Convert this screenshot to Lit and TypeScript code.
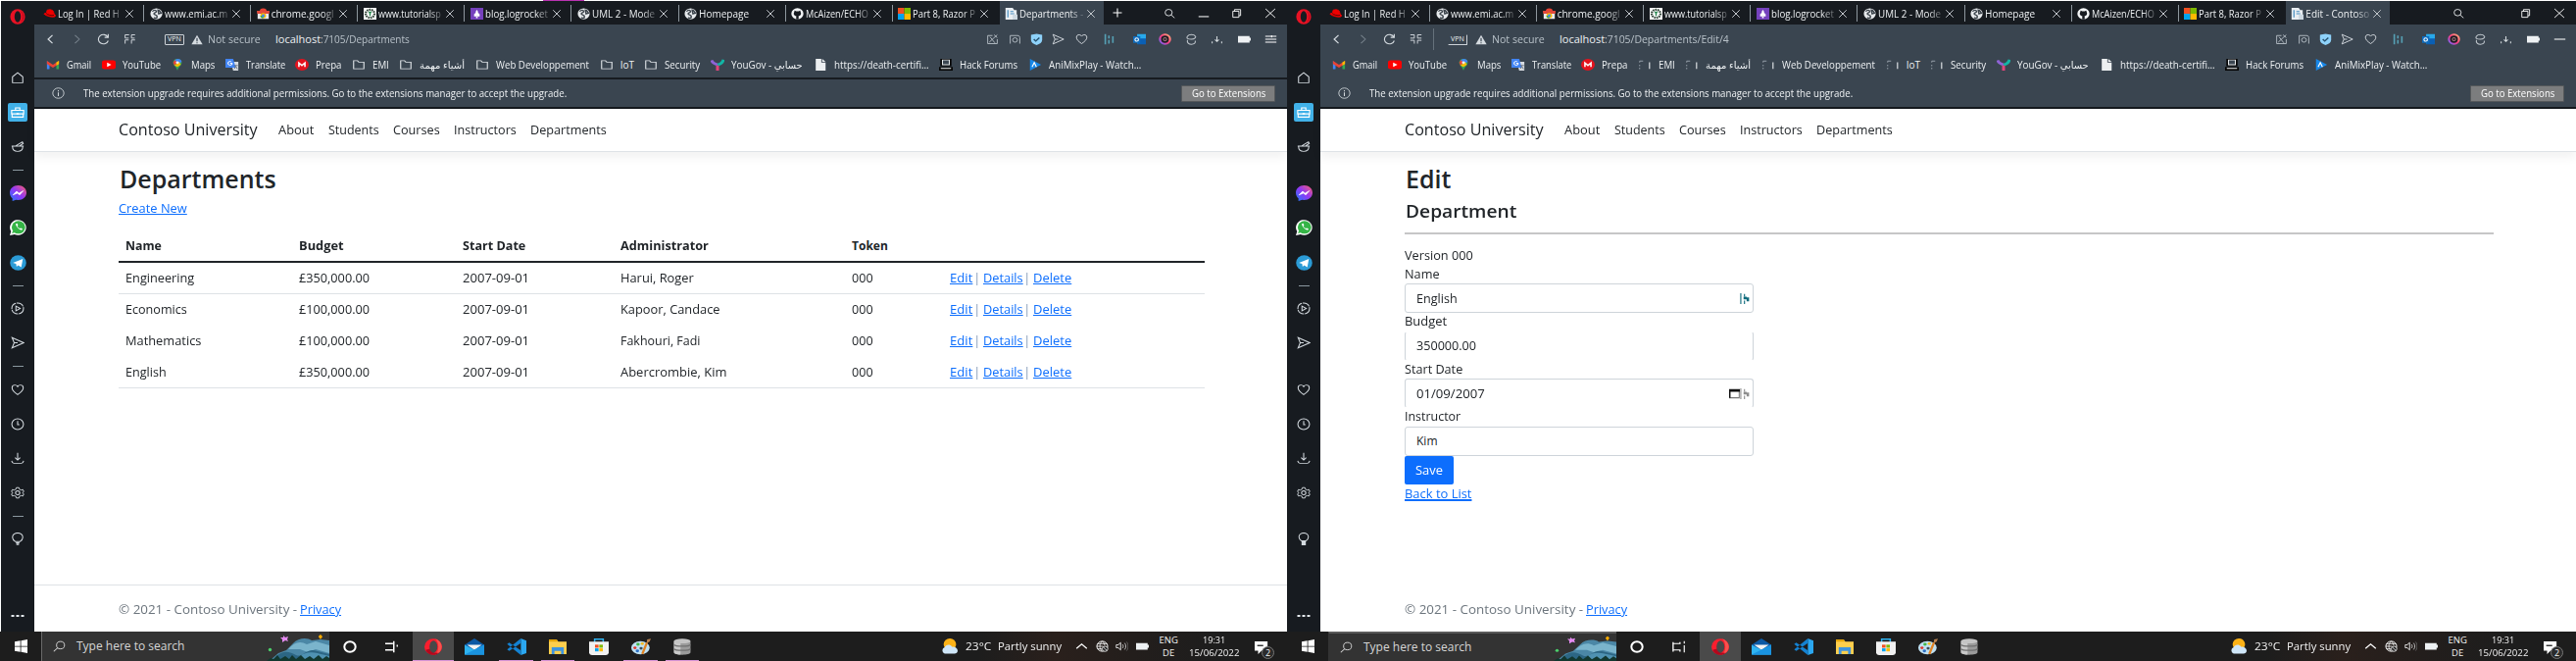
import { LitElement, html, css, svg, nothing } from "lit";
import { customElement, property, query } from "lit/decorators.js";
import { classMap } from "lit/directives/class-map.js";

/* Text stretched horizontally to a given advance width. */
@customElement("fit-text")
class FitText extends LitElement {
  @property({ type: Number }) w = 0;
  @property() text = "";
  @query("span") span!: HTMLElement;
  static styles = css`
    :host { display: inline-block; white-space: nowrap; flex: none; text-decoration: inherit; }
    span { display: inline-block; transform-origin: 0 50%; text-decoration: inherit; }
  `;
  render() {
    return html`<span>${this.text}</span>`;
  }
  updated() {
    this.style.width = this.w + "px";
    this.span.style.transform = `scaleX(${this.w / this.span.offsetWidth})`;
  }
}

const ft = (text: string, w: number, cls = "") => html`<fit-text class=${cls} .text=${text} .w=${w}></fit-text>`;

const L = "#d5dbe0";
const glyphs: Record<string, unknown> = {
  opera: svg`<ellipse cx="8" cy="8" rx="7.6" ry="7.8" fill="#e81224"/><ellipse cx="8" cy="8" rx="3.2" ry="5.8" fill="#171b20"/><path d="M11 2.2c2 1.300 3.200 3.400 3.200 5.800s-1.200 4.500-3.200 5.800a7.600 7.800 0 0 0 0-11.600z" fill="#a70014"/>`,
  operaTask: svg`<ellipse cx="8" cy="8" rx="8" ry="7.800" fill="#fa1e2e"/><path d="M9 .3a8 7.800 0 0 1 0 15.400c2.400-.8 3.600-4.200 3.600-7.700S11.400 1 9 .3z" fill="#f9524e"/><path d="M1 11c1.500 3 4 4.800 7 4.800 2 0 3.500-.6 5-2-4 .6-7-1-8-4z" fill="#b3081d"/><ellipse cx="8.200" cy="8" rx="3.600" ry="5.800" fill="#484848"/>`,
  home: svg`<path d="M2 14V6.500L8 1.500l6 5V14z" fill="none" stroke=${L} stroke-width="1.200"/>`,
  bag: svg`<path d="M1 5.500h14V10H1zM1.500 10v4h13v-4M5.500 5.500v-3h5v3" fill="none" stroke="#fff" stroke-width="1.300"/><path d="M6.500 9h3v2h-3z" fill="#fff"/>`,
  pot: svg`<path d="M1 7.500h14M2 8c0 4 2.500 6 6 6s6-2 6-6M6 7l7.500-5 1 2-4 3" fill="none" stroke=${L} stroke-width="1.200"/>`,
  messenger: svg`<defs><linearGradient id="mg" x1="0" y1="1" x2="1" y2="0"><stop offset="0" stop-color="#1e7bff"/><stop offset=".5" stop-color="#9038f5"/><stop offset="1" stop-color="#ff5f6d"/></linearGradient></defs><path d="M8 0c4.600 0 8 3.200 8 7.500S12.600 15 8 15l-2-.2L2.500 16v-2.700C1 12 0 10 0 7.500 0 3.200 3.400 0 8 0z" fill="url(#mg)"/><path d="M3 9.800 6.500 6l2.300 2L13 5.500 9.500 9.800 7.300 8z" fill="#fff" stroke="#fff" stroke-width=".6"/>`,
  whatsapp: svg`<path d="M0 16l1.200-4A7.800 7.800 0 1 1 4.500 15z" fill="#fff"/><circle cx="8.300" cy="7.800" r="6.500" fill="#35b446"/><path d="M2 14l1-3 2 2z" fill="#35b446"/><path d="M5.500 4.500c1 3 2.500 5 5.800 6.300l1-1.400-1.800-1-1 .6C8.400 8.400 7.700 7.500 7.200 6.500l.7-.8-.8-1.900z" fill="#fff"/>`,
  telegram: svg`<circle cx="8" cy="8" r="7.800" fill="#2b9bd6"/><path d="M3 8l9.500-4L11 12.500 8 10.500l-1.500 1.500L6 9z" fill="#fff"/>`,
  player: svg`<circle cx="8" cy="8" r="6.800" fill="none" stroke=${L} stroke-width="1.200" stroke-dasharray="9 1"/><path d="M6 5l5 3-5 3z" fill="none" stroke=${L} stroke-width="1.200"/>`,
  send: svg`<path d="M1.500 1.500 15 8 1.500 14.500 4 8z M4 8h4" fill="none" stroke=${L} stroke-width="1.200"/>`,
  heart: svg`<path d="M8 14C4 11 1.500 8.500 1.500 5.500 1.500 3 3 2 4.800 2 6.300 2 7.500 3 8 4c.5-1 1.700-2 3.200-2C13 2 14.500 3 14.500 5.500c0 3-2.500 5.500-6.500 8.500z" fill="none" stroke=${L} stroke-width="1.200"/>`,
  clock: svg`<circle cx="8" cy="8" r="6.800" fill="none" stroke=${L} stroke-width="1.200"/><path d="M8 4v4.500h2" fill="none" stroke=${L} stroke-width="1.200"/>`,
  download: svg`<path d="M8 1v9M5 7l3 3 3-3M1 11c.5 2 1 3 2.500 3h9c1.500 0 2-1 2.500-3" fill="none" stroke=${L} stroke-width="1.200"/>`,
  gear: svg`<circle cx="8" cy="8" r="2.500" fill="none" stroke=${L} stroke-width="1.200"/><path d="M6.500 1.500h3l.5 2 2 1 2.200-.5 1 2.500L13.500 8l1.700 1.500-1 2.500-2.200-.5-2 1-.5 2h-3l-.5-2-2-1-2.200.5-1-2.500L2.500 8 .8 6.500l1-2.500 2.200.5 2-1z" fill="none" stroke=${L} stroke-width="1.100"/>`,
  bulb: svg`<path d="M5.500 11.500C3.500 10 2 8.500 2 6a6 5.500 0 0 1 12 0c0 2.500-1.500 4-3.500 5.500z" fill="none" stroke=${L} stroke-width="1.200"/><path d="M6 13h4M6.500 15h3" stroke=${L} stroke-width="1.600"/>`,
  bulbFill: svg`<path d="M5.500 10.500C3.500 9 2.500 7.500 2.500 5.500a5.500 5 0 0 1 11 0c0 2-1 3.500-3 5z" fill="none" stroke=${L} stroke-width="1.200"/><path d="M5.500 11h5v5h-5z" fill=${L}/>`,
  dots: svg`<path d="M1.500 7h3v2h-3zM6.500 7h3v2h-3zM11.500 7h3v2h-3z" fill="#e3e8ec"/>`,
  redhat: svg`<path d="M1 8c2 3.500 14 6 14.500 3 .2-1-.6-2-1.500-2.500L12.500 4c-.3-1-4-2-5.500-1.500L5 3 4 7z" fill="#e00" stroke="#e00"/><path d="M4 7.500c1 2 7 3.500 9.500 2.500" stroke="#3a0505" fill="none" stroke-width="1"/>`,
  globe: svg`<circle cx="8" cy="8" r="7.500" fill="#e6e9ec"/><path d="M3 5c2-3 5-2 5 0s-3 1-3 3 4 1 4 4-3 2-4 1M10 3c2 0 3 2 4 4l-3 1z" fill="none" stroke="#3c444c" stroke-width="1.800"/>`,
  store2: svg`<path d="M1 5h14v10H1z" fill="#e8eaed"/><path d="M3.500 5a4.500 4.500 0 0 1 9 0z" fill="#ea4335"/><path d="M0 4h16l-.5 4h-15z" fill="#e2493b"/><circle cx="8" cy="10.500" r="3.600" fill="#fbbc04"/><path d="M4.500 10.500a3.600 3.600 0 0 0 3.500 3.600l1.500-3.600z" fill="#34a853"/><circle cx="8" cy="10.500" r="1.800" fill="#4285f4"/>`,
  tut: svg`<path d="M0 0h16v16H0z" fill="#fff"/><circle cx="8" cy="8" r="5.500" fill="none" stroke="#33453a" stroke-width="2.800" stroke-dasharray="2 1"/><path d="M6 6h4M8 6v5" stroke="#2f8a55" stroke-width="1.800"/>`,
  rocket: svg`<path d="M0 0h16v16H0z" fill="#7541bd"/><path d="M8 2.500c1 1 1.500 2.500 1.500 4l2 2v3h-7v-3l2-2c0-1.500.5-3 1.500-4zM7 12h2v2H7z" fill="#fff"/>`,
  github: svg`<circle cx="8" cy="8" r="7.600" fill="#f2f4f5"/><path d="M4.500 3.500 6.500 4.700h3l2-1.200.6 2.500c1.500 3-1 5-2.600 5v4.500h-3V11c-2-.2-4-2-2.600-5z" fill="#171b20"/>`,
  ms: svg`<path d="M0 0h8v8H0z" fill="#f25022"/><path d="M8 0h8v8H8z" fill="#7fba00"/><path d="M0 8h8v8H0z" fill="#00a4ef"/><path d="M8 8h8v8H8z" fill="#ffb900"/>`,
  doc: svg`<path d="M1 0h9l2 3h3v13H1z" fill="#e9eef2"/><path d="M4 3v10M7 5h4M7 8h5" stroke="#4a90c2" stroke-width="1.500"/><path d="M10 9h6v7h-6z" fill="#cdd9e2"/>`,
  x: svg`<path d="M3 3l10 10M13 3 3 13" stroke="#c6cbd0" stroke-width="1.300"/>`,
  X: svg`<path d="M1.500 1.500l13 13M14.500 1.500l-13 13" stroke="#fff" stroke-width="1.300"/>`,
  plus: svg`<path d="M8 2v12M2 8h12" stroke="#fff" stroke-width="1.400"/>`,
  search: svg`<circle cx="7" cy="7" r="4.800" fill="none" stroke="#e4e7ea" stroke-width="1.300"/><path d="M10.500 10.500 15 15" stroke="#e4e7ea" stroke-width="1.300"/>`,
  searchL: svg`<circle cx="9.500" cy="6.500" r="5" fill="none" stroke="#d8d8d8" stroke-width="1.200"/><path d="M6 10 1 15" stroke="#d8d8d8" stroke-width="1.300"/>`,
  min: svg`<path d="M1 13h14" stroke="#fff" stroke-width="1.500"/>`,
  restore: svg`<path d="M2.500 5h9v9h-9zM5 5V2.500h9v9h-2.500" fill="none" stroke="#fff" stroke-width="1.300"/>`,
  back: svg`<path d="M10.500 2.500 5 8l5.500 5.500" fill="none" stroke=${L} stroke-width="1.500"/>`,
  fwd: svg`<path d="M5.500 2.500 11 8l-5.500 5.500" fill="none" stroke="#77828c" stroke-width="1.300"/>`,
  reload: svg`<path d="M13.500 5A6.300 6.300 0 1 0 14 10M14 1v4.500H9.500" fill="none" stroke=${L} stroke-width="1.400"/>`,
  dialL: svg`<path d="M7 2H2v4.500h4.500M2 9h4.500M2 9v5M14.500 2H10v4.500h4M10 9h4.500M10 9v5" fill="none" stroke=${L} stroke-width="1.200"/>`,
  dialR: svg`<path d="M1 2h5v4.500H1M15 2h-5v4.500h5M1 9.500h5V14M15 9.500h-5V14" fill="none" stroke=${L} stroke-width="1.200"/>`,
  warn: svg`<path d="M8 1 15.500 15H.5z" fill="#d5dbe0"/><path d="M8 5.500v5M8 12v1.500" stroke="#3a4550" stroke-width="1.600"/>`,
  snap: svg`<path d="M2 3h6M2 3v11h12V8M4 12 14 2M10 2l4 4M5 5l6 8" fill="none" stroke="#b4bdc4" stroke-width="1.200"/>`,
  cam: svg`<path d="M2 14V3h9c2 0 3 1 3 3v8" fill="none" stroke="#b4bdc4" stroke-width="1.200"/><circle cx="8" cy="9" r="3" fill="none" stroke="#b4bdc4" stroke-width="1.200"/>`,
  shield: svg`<path d="M8 .5 15 2v7c0 3.500-3 5.500-7 7-4-1.500-7-3.500-7-7V2z" fill="#8ed2fa"/><path d="M4.500 8 7 10.500 11.500 6" fill="none" stroke="#24506e" stroke-width="1.800"/>`,
  dash: svg`<path d="M2 1v14M6.500 3v4M6.500 9v5M11.500 4v9" stroke="#56a0b4" stroke-width="2"/>`,
  dashTeal: svg`<path d="M1.500 0v16M7.500 1v4M7.500 11v5" stroke="#0e6a7c" stroke-width="1.800"/><path d="M6 5h5v4H6zM11 6h4v6h-4z" fill="#0e6a7c"/>`,
  dashGray: svg`<path d="M1.500 0v16M7.500 1v4M7.500 11v5" stroke="#8d8d8d" stroke-width="1.800"/><path d="M6 5h5v4H6zM11 6h4v6h-4z" fill="#8d8d8d"/>`,
  cal: svg`<path d="M1 2.500h14V14H1z" fill="none" stroke="#777" stroke-width="1.500"/><path d="M0 1h16v4H0zM0 1h2v13H0z" fill="#111"/>`,
  outlook: svg`<path d="M5 1h11v13H5z" fill="#28a8ea"/><path d="M8 7h8v8H5z" fill="#0a5fb4"/><path d="M0 4h9v9H0z" fill="#0f6cbd"/><circle cx="4.500" cy="8.500" r="2.200" fill="none" stroke="#fff" stroke-width="1.300"/>`,
  ring: svg`<defs><linearGradient id="rg" x1="0" y1="1" x2="1" y2="0"><stop offset="0" stop-color="#6c63ff"/><stop offset=".5" stop-color="#ff3c7d"/><stop offset="1" stop-color="#ffb07a"/></linearGradient></defs><circle cx="8" cy="8" r="6.300" fill="#1c1c22" stroke="url(#rg)" stroke-width="2.800"/><circle cx="8" cy="8" r="2" fill="none" stroke="#a7767a" stroke-width="1.300"/>`,
  cube: svg`<path d="M13 4C11 1 5 1 3 4s1 4 5 4 6-3 5-4M3 9c-1 4 2 6 5 6s6-2 4.500-5" fill="none" stroke="#c3cad0" stroke-width="1.300"/>`,
  dl2: svg`<path d="M8 4v7M5.500 8.500 8 11l2.500-2.500M2 11v2.500M14 11v2.500" stroke="#d3d9dd" fill="none" stroke-width="1.300"/>`,
  batt: svg`<path d="M0 3.500h14.500v9H0zM14.500 6H16v4h-1.500z" fill="#eef1f3"/>`,
  menu: svg`<path d="M1 4h14M1 8h14M1 12h14M9 2.500v3" stroke="#fff" stroke-width="1.300"/>`,
  line: svg`<path d="M1 8h14" stroke="#fff" stroke-width="1.400"/>`,
  gmail: svg`<path d="M1 3v11h3V6z" fill="#4285f4"/><path d="M15 3v11h-3V6z" fill="#34a853"/><path d="M1 2.500 8 8l7-5.500V7l-7 5-7-5z" fill="#ea4335"/><path d="M12 4.500l3-2V7l-3 2z" fill="#fbbc04"/>`,
  youtube: svg`<rect x="0" y="2" width="16" height="12" rx="3" fill="#f00"/><path d="M6 5l5 3-5 3z" fill="#fff"/>`,
  maps: svg`<path d="M8 0c3 0 5 2.200 5 5 0 4-4 6-5 11C7 11 3 9 3 5c0-2.800 2-5 5-5z" fill="#34a853"/><path d="M4.500 1.800 8 0c3 0 4.500 1.500 5 4L8 8z" fill="#4285f4"/><path d="M3 5l2-3.500L8 5 4.500 9z" fill="#ea4335"/><path d="M4.500 9 10 4l2 4-4 3z" fill="#fbbc04"/><circle cx="8" cy="5" r="1.800" fill="#eee"/>`,
  translate: svg`<path d="M6 4h9v12H9z" fill="#d7dbe0"/><path d="M0 0h9l3 12H0z" fill="#4285f4"/><path d="M8 6a2.500 2.500 0 1 1-1-2M8 6H5.500" fill="none" stroke="#fff" stroke-width="1.200"/><path d="M10 9h4.500M12 10l-1.500 3.500M12 10l2 4" stroke="#5a6470" fill="none"/>`,
  prepa: svg`<circle cx="8" cy="8" r="8" fill="#e3131e"/><path d="M4.500 11V5.500L8 9l3.500-3.500V11" fill="none" stroke="#fff" stroke-width="1.800"/>`,
  folder: svg`<path d="M2 13.500v-11h4.500L8 4.500h6v9z" fill="none" stroke="#dde2e6" stroke-width="1.300"/>`,
  folderR: svg`<path d="M2 3h4M2 3v2M2 8v2M2 12v2" fill="none" stroke="#a9b3bb" stroke-width="1"/><path d="M13.500 4.500v9" stroke="#e5e9ec" stroke-width="1.300"/>`,
  yougov: svg`<path d="M1 2c1 3 3.500 5 7 6" stroke="#8f63d6" stroke-width="3.500" fill="none"/><path d="M15 1c-1 4-3 6-7 7" stroke="#12b5a5" stroke-width="3.500" fill="none"/><path d="M8 9v7" stroke="#e0457b" stroke-width="3.500"/>`,
  file: svg`<path d="M2.500 0H9v5h5v11H2.500z" fill="#eceff1"/><path d="M10 0l4 4h-4z" fill="#eceff1"/>`,
  hack: svg`<path d="M1.500 0h13v10h-13zM0 11h16v5H0z" fill="#050505"/><path d="M4 1.500h8v6.500H4z" fill="#3b4651" stroke="#e4e8ea" stroke-width="1.200"/><path d="M2 13h12" stroke="#e4e8ea" stroke-width="1.400"/>`,
  ani: svg`<path d="M2 0l13 8-13 8z" fill="#1787e8"/><path d="M4.500 11 7 5l2.500 6" stroke="#fff" stroke-width="1.300" fill="none"/>`,
  info: svg`<circle cx="8" cy="8" r="7" fill="none" stroke="#d2d8dc" stroke-width="1.100"/><path d="M8 4v1.600M8 7v5" stroke="#d2d8dc" stroke-width="1.300"/>`,
  win: svg`<path d="M0 2.500 7 1.500V7.600H0zM8 1.300 16 0v7.600H8zM0 8.500h7v6L0 13.500zM8 8.500h8V16l-8-1.300z" fill="#fff"/>`,
  ringW: svg`<circle cx="8" cy="8" r="6.500" fill="none" stroke="#fff" stroke-width="2.300"/>`,
  taskview: svg`<path d="M0 4h9M0 12h9M10 1v14" fill="none" stroke="#fff" stroke-width="1.700"/><path d="M14 5.500v2.500" stroke="#fff" stroke-width="1.500"/>`,
  taskviewR: svg`<path d="M1 2v2h8V2M1 14v-2h8v2M1 4v8" fill="none" stroke="#fff" stroke-width="1.500"/><path d="M14 1v3M14 6v9" stroke="#fff" stroke-width="1.300"/>`,
  mail: svg`<path d="M0 6 8 0l8 6v9.500H0z" fill="#0c59a4"/><path d="M2 6h12l-6 5z" fill="#f3f3f3"/><path d="M0 6l8 5 8-5v9.500H0z" fill="#2fb4f2"/><path d="M0 15.500 16 6v9.500z" fill="#1a93e0"/>`,
  vscode: svg`<path d="M11.500 0 16 2v12l-4.500 2z" fill="#2ba7f0"/><path d="M11.500 4.500 2 12 .3 10.500 11.500 0zM11.500 11.500 2 4 .3 5.500 11.500 16z" fill="#1482d2"/>`,
  explorer: svg`<path d="M0 1h7l1.500 2H16v12H0z" fill="#ffcf4d"/><path d="M0 1h7l1 2H0z" fill="#e5a50a"/><path d="M2.500 15V8.500h11V15h-2.500v-3H5v3z" fill="#3f94de"/>`,
  msstore: svg`<path d="M4.500 4V.7h7V4" fill="none" stroke="#2fb4f2" stroke-width="1.200"/><path d="M0 3h16v10.500c0 1.500-1 2.500-2.500 2.500h-11C1 16 0 15 0 13.500z" fill="#f1f1f1"/><path d="M4.800 6h2.900v2.900H4.800z" fill="#f25022"/><path d="M8.300 6h2.900v2.900H8.300z" fill="#7fba00"/><path d="M4.800 9.500h2.900v2.900H4.800z" fill="#00a4ef"/><path d="M8.300 9.500h2.900v2.900H8.300z" fill="#ffb900"/>`,
  paint: svg`<ellipse cx="7.500" cy="9" rx="7.500" ry="6.300" fill="#bfe0f2"/><circle cx="3" cy="9" r="1.300" fill="#e0352b"/><circle cx="5.500" cy="5.700" r="1.400" fill="#43b649"/><circle cx="9" cy="5" r="1.300" fill="#f5b81c"/><circle cx="5" cy="12" r="1.400" fill="#2d6fc4"/><circle cx="8" cy="9.500" r="1.300" fill="#3c4a55"/><path d="M9 15 12.800 4" stroke="#e08324" stroke-width="1.900"/><path d="M12.500 4.500 13 1l3-.8L15 3z" fill="#b98250"/>`,
  db: svg`<path d="M.5 2.500v11c0 3 15 3 15 0v-11z" fill="#9b9b9b"/><path d="M.5 2.500v11c0 1.500 4 2.200 6 2.200V2.500z" fill="#c9c9c9"/><ellipse cx="8" cy="2.500" rx="7.500" ry="2.300" fill="#c4c4c4"/><path d="M.5 6c1 2 14 2 15 0M.5 10c1 2 14 2 15 0" stroke="#707070" stroke-width="1.200" fill="none"/>`,
  cloud: svg`<circle cx="8.500" cy="6" r="6" fill="#fbb217"/><path d="M3.500 15.500a3.500 3.500 0 0 1 0-6.500C4.500 6 9 5.500 10.500 8.500c3-.5 5.500 1.500 5.500 4 0 2-1.500 3-3 3z" fill="#cfe6f8"/>`,
  chev: svg`<path d="M1.500 11 8 5l6.500 6" fill="none" stroke="#fff" stroke-width="1.500"/>`,
  net: svg`<circle cx="8" cy="8" r="6.800" fill="none" stroke="#fff" stroke-width="1.200"/><path d="M8 1c-4 4-4 10 0 14M8 1c2 2 3 4 3 6M1 8h8M2 4.500h12M2 11.500h6" fill="none" stroke="#fff"/><circle cx="11.500" cy="11.500" r="3.500" fill="#222" stroke="#fff"/><path d="M9.500 9.500l4 4" stroke="#fff"/>`,
  sound: svg`<path d="M1 6h2.500l3-3v10l-3-3H1z" fill="none" stroke="#e8e8e8" stroke-width="1.200"/><path d="M9 5.500c1 1.500 1 3.500 0 5M11.500 3.500c2 2.500 2 6.500 0 9" fill="none" stroke="#ddd"/><path d="M14 2c2.500 3.500 2.500 8.500 0 12" fill="none" stroke="#777"/>`,
  note: svg`<path d="M0 1h15v11H8l-4 4v-4H0z" fill="#fff"/><path d="M3 6h7" stroke="#222" stroke-width="1.500"/>`,
};

const ico = (name: string, cls = "s14") =>
  html`<svg class=${cls} viewBox="0 0 16 16" preserveAspectRatio="none" aria-hidden="true">${glyphs[name]}</svg>`;

const shared = css`
  * { box-sizing: border-box; }
  svg { display: block; flex: none; }
  .s11 { width: 11px; height: 11px; }
  .s12 { width: 12px; height: 11px; }
  .s14 { width: 13px; height: 12px; }
  .s16 { width: 16px; height: 16px; }
  a { color: #0d6efd; text-decoration: underline; display: inline-flex; }
`;

/* ---------------- side bar ---------------- */
@customElement("side-bar")
class SideBar extends LitElement {
  @property({ type: Boolean }) second = false;
  static styles = [shared, css`
    :host { display: flex; flex-direction: column; width: 34px; background: #171b20; align-items: center; flex: none; }
    .logo { height: 61px; padding-top: 8px; }
    .slot { height: 35.200px; display: grid; place-items: center; flex: none; }
    .icon { width: 14px; height: 13px; }
    .brand { width: 17px; height: 16px; }
    .sep { height: 12px; display: grid; place-items: center; flex: none; }
    .sep i { width: 11px; height: 1px; background: #8a979f; }
    .hide i { background: transparent; }
    .active { width: 20px; height: 19px; border-radius: 2px; background: #41b1e8; display: grid; place-items: center; }
    .more { margin-top: auto; height: 24px; }
  `];
  render() {
    const items = ["home", "bag", "pot", "-", "messenger", "whatsapp", "telegram", "=", "player", "send", "-", "heart", "clock", "download", "gear", "-", this.second ? "bulbFill" : "bulb"];
    return html`
      <div class="logo">${ico("opera", "s16")}</div>
      ${items.map((n) =>
        n === "-" || n === "="
          ? html`<div class=${classMap({ sep: true, hide: this.second && n === "-" })}><i></i></div>`
          : html`<div class="slot">${n === "bag"
              ? html`<div class="active">${ico(n, "icon")}</div>`
              : ico(n, ["messenger", "whatsapp", "telegram"].includes(n) ? "brand" : "icon")}</div>`)}
      <div class="more">${ico("dots", "s16")}</div>`;
  }
}

/* ---------------- browser chrome ---------------- */
type Tab = [string, string, number];
const commonTabs: Tab[] = [
  ["redhat", "Log In | Red H", 63], ["globe", "www.emi.ac.m", 64], ["store2", "chrome.googl", 64],
  ["tut", "www.tutorialsp", 64], ["rocket", "blog.logrocket", 64], ["globe", "UML 2 - Mode", 64],
  ["globe", "Homepage", 51], ["github", "McAizen/ECHO", 64], ["ms", "Part 8, Razor P", 64],
];
const marks: Tab[] = [
  ["gmail", "Gmail", 25], ["youtube", "YouTube", 39], ["maps", "Maps", 24], ["translate", "Translate", 40],
  ["prepa", "Prepa", 26], ["folder", "EMI", 16.5], ["folder", "أشياء مهمة", 46.500], ["folder", "Web Developpement", 95],
  ["folder", "IoT", 14], ["folder", "Security", 36], ["yougov", "YouGov - حسابي", 73], ["file", "https://death-certifi...", 97],
  ["hack", "Hack Forums", 59], ["ani", "AniMixPlay - Watch...", 94],
];

@customElement("browser-chrome")
class BrowserChrome extends LitElement {
  @property({ type: Boolean }) second = false;
  static styles = [shared, css`
    :host { display: block; background: #3a4550; color: #eef1f3; font-size: 10px; line-height: 14px; }
    .tabs { display: flex; height: 24px; background: #171b20; padding-left: 3px; }
    .tab { width: 109.100px; display: flex; align-items: center; padding: 1px 0 0 5.500px; border-right: 1px solid #8e979e; border-image: linear-gradient(transparent 20%, #8e979e 20%, #8e979e 85%, transparent 85%) 1; flex: none; }
    .tab.last { border-right-color: transparent; border-image: none; }
    .tab.on { background: #3a4550; width: 106px; border: 0; }
    .title { width: 67px; margin-left: 1px; overflow: hidden; padding-left: 1px; -webkit-mask-image: linear-gradient(90deg, #000 78%, rgba(0,0,0,.15)); mask-image: linear-gradient(90deg, #000 78%, rgba(0,0,0,.15)); display: flex; }
    .fav { width: 13px; height: 12px; }
    .tab .x { width: 12px; height: 12px; margin-left: 1px; }
    .plus { width: 12px; height: 12px; }
    .newtab { display: grid; place-items: center; width: 29px; }
    .win { margin-left: auto; display: grid; grid-template-columns: repeat(4, 34.200px); place-items: center; }
    .hidden { visibility: hidden; }
    .bar { display: flex; align-items: center; height: 30px; padding: 0 8px 0 10px; }
    .nav { display: flex; gap: 14px; align-items: center; }
    .vline { width: 1px; height: 22px; margin-left: 11px; background: transparent; }
    .second .vline { background: #65717b; }
    .vpn { border: 1px solid #ccd2d7; border-radius: 1px; font-size: 7px; line-height: 8px; width: 20px; height: 11px; margin: 0 7px 0 17px; display: grid; place-items: center; }
    .second .vpn { margin-left: 14px; margin-right: 8px; border-top-color: transparent; border-left-color: transparent; }
    .muted { color: #b8c1c8; font-size: 11px; }
    .sec { margin-left: 5px; }
    .url { margin-left: 15px; display: flex; font-size: 11px; }
    .tools { margin-left: auto; display: grid; place-items: center; grid-template-columns: 23px 22px 22.500px 22.500px 24px 34px 26px 27px 26px 27px 28px 27px; margin-right: -5px; }
    .marks { display: flex; align-items: center; height: 22px; padding-left: 12px; gap: 10.600px; }
    .mark { display: flex; align-items: center; gap: 7px; }
    .bico { width: 14px; height: 12px; }
    .ext { height: 32px; margin-top: 2px; border-top: 2px solid #171b20; border-bottom: 2px solid #14181d; display: flex; align-items: center; padding: 0 12px 0 18px; }
    .ext.second { border-top-color: transparent; }
    .msg { margin-left: 19px; }
    .btn { margin-left: auto; width: 96px; height: 17px; background: #7c7d7e; border: 1px solid #55585b; border-radius: 1px; display: grid; place-items: center; color: #fff; }
  `];
  render() {
    const s = this.second;
    const last: Tab = s ? ["doc", "Edit - Contoso", 65] : ["doc", "Departments -", 65];
    const tools = [...["snap", "cam", "shield", "send", "heart", "dash", "outlook", "ring", "cube", "dl2", "batt"], s ? "line" : "menu"];
    return html`
      <div class="tabs">
        ${[...commonTabs, last].map(([i, t, w], n) => html`
          <div class=${classMap({ tab: true, on: n === 9, last: n === 8 })}>
            ${ico(i, "fav")}<div class="title">${ft(t, w)}</div>${ico("x", "x")}
          </div>`)}
        <div class="newtab">${s ? nothing : ico("plus", "plus")}</div>
        <div class="win">
          ${ico("search", "s12")}${ico("min", s ? "s12 hidden" : "s12")}${ico("restore", "s11")}${ico("X", "s12")}
        </div>
      </div>
      <div class=${classMap({ bar: true, second: s })}>
        <div class="nav">${ico("back")}${ico("fwd")}${ico("reload")}${ico(s ? "dialR" : "dialL")}</div>
        <i class="vline"></i>
        <div class="vpn">${ft("VPN", 14)}</div>
        ${ico("warn", "s12")}
        ${ft("Not secure", 54, "muted sec")}
        <div class="url">${ft("localhost", 46)}${s ? ft(":7105/Departments/Edit/4", 127, "muted") : ft(":7105/Departments", 91, "muted")}</div>
        <div class="tools">${tools.map((t) => ico(t))}</div>
      </div>
      <div class="marks">
        ${marks.map(([i, t, w]) => html`<div class="mark">${ico(s && i === "folder" ? "folderR" : i, "bico")}${ft(t, w)}</div>`)}
      </div>
      <div class=${classMap({ ext: true, second: s })}>
        ${ico("info")}
        ${ft("The extension upgrade requires additional permissions. Go to the extensions manager to accept the upgrade.", 493, "msg")}
        <div class="btn">${ft("Go to Extensions", 75)}</div>
      </div>`;
  }
}

/* ---------------- site frame ---------------- */
@customElement("site-frame")
class SiteFrame extends LitElement {
  @property({ type: Boolean }) second = false;
  static styles = [shared, css`
    :host { display: flex; flex-direction: column; flex: 1; background: #fff; color: #212529; font-size: 12px; line-height: 19px; min-height: 0; }
    .nav { height: 44px; border-bottom: 1px solid #dee2e6; box-shadow: 0 6px 9px rgba(0,0,0,.05); padding: 0 0 0 86px; display: flex; align-items: center; }
    .brand { font-size: 16px; }
    .links { display: flex; gap: 14.200px; margin-left: 21px; }
    .body { flex: 1; padding: 0 84px 0 86px; }
    .foot { height: 48px; padding: 2px 0 0 86px; border-top: 1px solid #dee2e6; display: flex; align-items: center; gap: 3px; color: #6c757d; }
    .foot.second { border-color: transparent; }
  `];
  render() {
    return html`
      <div class="nav">
        ${ft("Contoso University", 142, "brand")}
        <div class="links">${ft("About", 36.500)}${ft("Students", 52)}${ft("Courses", 47.500)}${ft("Instructors", 64)}${ft("Departments", 78)}</div>
      </div>
      <div class="body"><slot></slot></div>
      <div class=${classMap({ foot: true, second: this.second })}>
        ${ft("© 2021 - Contoso University -", 182)}<a>${ft("Privacy", 42.500)}</a>
      </div>`;
  }
}

@customElement("departments-page")
class DepartmentsPage extends LitElement {
  static styles = [shared, css`
    :host { display: block; }
    h1 { margin: 0; font-size: 25px; line-height: 30px; font-weight: 600; padding: 12px 0 0 1px; }
    .new { height: 16px; font-size: 12.500px; align-items: center; line-height: 16px; display: flex; margin: 8px 0 14px; }
    .row { display: grid; grid-template-columns: 176.500px 167px 161.500px 236px 100px 1fr; height: 32px; align-items: center; padding: 0 0 1px 7px; border-bottom: 1px solid transparent; }
    .head { font-weight: 700; height: 33px; border-bottom: 2px solid #212529; padding-bottom: 0; }
    .ruled { border-color: #dee2e6; }
    .act { display: flex; gap: 3.300px; }
    .bar { color: #17407a; }
  `];
  render() {
    const rows: [string, number, string, string, number][] = [
      ["Engineering", 70, "£350,000.00", "Harui, Roger", 75], ["Economics", 63, "£100,000.00", "Kapoor, Candace", 101.5],
      ["Mathematics", 77, "£100,000.00", "Fakhouri, Fadi", 82], ["English", 42, "£350,000.00", "Abercrombie, Kim", 108],
    ];
    return html`
      <h1>${ft("Departments", 160)}</h1>
      <div class="new"><a>${ft("Create New", 70)}</a></div>
      <div class="row head">${ft("Name", 37)}${ft("Budget", 46)}${ft("Start Date", 64)}${ft("Administrator", 90)}${ft("Token", 37)}</div>
      ${rows.map(([n, nw, b, a, aw], i) => html`
        <div class=${classMap({ row: true, ruled: i === 0 || i === 3 })}>
          ${ft(n, nw)}${ft(b, 72)}${ft("2007-09-01", 68.5)}${ft(a, aw)}${ft("000", 22)}
          <div class="act"><a>${ft("Edit", 23)}</a>${ft("|", 4, "bar")}<a>${ft("Details", 40.5)}</a>${ft("|", 4, "bar")}<a>${ft("Delete", 39)}</a></div>
        </div>`)}`;
  }
}

@customElement("edit-page")
class EditPage extends LitElement {
  static styles = [shared, css`
    :host { display: block; }
    h1 { margin: 0; font-size: 25px; line-height: 30px; font-weight: 600; padding: 12px 0 0 1px; }
    h2 { margin: 6px 0 0; font-size: 17.500px; line-height: 24px; font-weight: 600; padding-left: 1px; }
    .hr { height: 2px; background: #c6c6c7; margin: 10px 0 13px; }
    .line { height: 18.700px; line-height: 18.700px; display: flex; }
    .field { width: 356px; height: 29.800px; border: 1px solid #ced4da; border-radius: 3px; padding: 0 3px 0 11px; display: flex; align-items: center; }
    .field .tail { margin-left: auto; display: flex; gap: 0; }
    .field .d { width: 10px; height: 11px; }
    .field .c { width: 11px; height: 11px; }
    .open { border-top-color: transparent; border-bottom-color: transparent; }
    .nobottom { border-bottom-color: transparent; }
    .save { width: 50px; height: 29px; background: #0d6efd; color: #fff; border-radius: 2px; display: grid; place-items: center; font-weight: 500; }
    .backl { text-decoration-thickness: 2px; text-underline-offset: 1px; }
  `];
  render() {
    return html`
      <h1>${ft("Edit", 46)}</h1>
      <h2>${ft("Department", 113)}</h2>
      <div class="hr"></div>
      <div class="line">${ft("Version 000", 70)}</div>
      <div class="line">${ft("Name", 36)}</div>
      <div class="field">${ft("English", 42)}<div class="tail">${ico("dashTeal", "d")}</div></div>
      <div class="line">${ft("Budget", 43)}</div>
      <div class="field open">${ft("350000.00", 61)}</div>
      <div class="line">${ft("Start Date", 59)}</div>
      <div class="field nobottom">${ft("01/09/2007", 70)}<div class="tail">${ico("cal", "c")}${ico("dashGray", "d")}</div></div>
      <div class="line">${ft("Instructor", 57)}</div>
      <div class="field">${ft("Kim", 22)}</div>
      <div class="save">${ft("Save", 28)}</div>
      <a class="backl">${ft("Back to List", 69)}</a>`;
  }
}

/* ---------------- task bar ---------------- */
@customElement("task-bar")
class TaskBar extends LitElement {
  @property({ type: Boolean }) second = false;
  static styles = [shared, css`
    :host { display: flex; height: 30px; background: linear-gradient(90deg, #1d1d1d 76%, #2a201c 82%, #231e1c 88%, #1d1d1d 95%); color: #f2f2f2; font-size: 11.500px; line-height: 14px; }
    .start { width: 42px; display: grid; place-items: center; }
    .start svg { width: 13px; height: 14px; }
    .find { width: 294px; background: #333; border-left: 1px solid #6a6a6a; display: flex; align-items: center; padding-left: 11px; color: #d6d6d6; font-size: 12px; }
    .find.second { border-left-color: #333; border-top: 2px solid #5a5a5a; }
    .find fit-text { margin-left: 11px; }
    .art { margin-left: auto; width: 64px; height: 100%; }
    .app { width: 42.350px; display: grid; place-items: center; position: relative; }
    .app.on { background: #4a4a4a; }
    .app i { position: absolute; bottom: 0; left: 4px; right: 4px; height: 1px; background: #d794d6; }
    .app.on i { left: 0; right: 0; }
    .big { width: 20px; height: 17px; }
    .std { width: 18px; height: 17px; }
    .small { width: 14px; height: 13px; }
    .tray { margin-left: auto; display: flex; align-items: center; padding-right: 19px; }
    .w { width: 17px; height: 16px; }
    .deg { margin-left: 8px; }
    .cond { margin: 0 14px 0 7px; }
    .sys { display: flex; gap: 7.500px; margin-right: 11px; }
    .stack { display: flex; flex-direction: column; align-items: center; font-size: 9.500px; line-height: 13.500px; }
    .lang { margin-right: 11.500px; }
    .bell { position: relative; margin-left: 16px; width: 14px; height: 13px; }
    .bell svg { width: 14px; height: 14px; }
    .badge { position: absolute; left: 7px; top: 6px; width: 13px; height: 13px; border: 1px solid #777; border-radius: 50%; background: #2b2b2b; font-size: 9px; line-height: 11px; text-align: center; }
  `];
  render() {
    const s = this.second;
    const apps: [string, string, boolean][] = [
      ["ringW", "small", false], [s ? "taskviewR" : "taskview", "small", false], ["operaTask", "std", true], ["mail", "big", false], ["vscode", "big", true],
      ["explorer", "std", true], ["msstore", "big", false], ["paint", "big", true], ["db", "std", true],
    ];
    return html`
      <div class="start">${ico("win")}</div>
      <div class=${classMap({ find: true, second: s })}>
        ${ico("searchL")}${ft("Type here to search", 110)}
        <svg class="art" viewBox="0 0 64 30" preserveAspectRatio="none">
          <path d="M5 28 12 22l8-3 7-7c5-6 15-6 19-3l9-1 9 1v21H3z" fill="#4b87a6"/>
          <path d="M22 18c6-7 12-9 19-5l9-3 14 4v8l-14-4-8 3-8-3z" fill="#7ab4cc"/>
          <path d="M10 25c8-7 14-4 20-1s10-6 18-5l16 4v7H8z" fill="#2c6684"/>
          <path d="M34 25c8-6 14-4 30 0v5H30z" fill="#4f92b2"/>
          <path d="M0 30l4-3 3 1 4-4 3 4 5-3 4 3 3-4 4 4 5-4 4 4 5-3 4 3 5-4 4 4 4-3 3 2v3z" fill="#12372f"/>
          <path d="M17 4l2 2 3-1-1 3 1 2-3-1-3 2 0-3-2-2 3 0z" fill="#e58bf2"/>
          <path d="M55 3l1.500 2L55 8l-2-3z" fill="#f9ab00"/><circle cx="55" cy="5.200" r="1.600" fill="#f9ab00"/>
          <circle cx="3.500" cy="18.500" r="1.700" fill="#4bcf6b"/>
        </svg>
      </div>
      ${apps.map(([n, c, r]) => html`<div class=${classMap({ app: true, on: n === "operaTask" })}>${ico(n, c)}${r && !s ? html`<i></i>` : nothing}</div>`)}
      <div class="tray">
        ${ico("cloud", "w")}${ft("23°C", 26, "deg")}${ft("Partly sunny", 65, "cond")}
        <div class="sys">${ico("chev")}${ico("net")}${ico("sound")}${ico("batt")}</div>
        <div class="stack lang">${ft("ENG", 19)}${ft("DE", 12)}</div>
        <div class="stack">${ft("19:31", 23)}${ft("15/06/2022", 51)}</div>
        <div class="bell">${ico("note")}<span class="badge">2</span></div>
      </div>`;
  }
}

@customElement("app-root")
class AppRoot extends LitElement {
  static styles = [shared, css`
    :host { display: grid; grid-template-columns: 1313px 1315px; height: 674px; overflow: hidden; background: #fff; font-family: "Open Sans", "Noto Sans", "DejaVu Sans", sans-serif; }
    .screen { display: flex; flex-direction: column; min-width: 0; height: 674px; }
    .strip { height: 1px; flex: none; padding-left: 554px; }
    .strip i { display: block; width: 42px; height: 1px; background: #b832b0; }
    .main { display: flex; flex: 1; min-height: 0; }
    .first { padding-left: 1px; }
    .col { flex: 1; display: flex; flex-direction: column; min-width: 0; }
  `];
  screen(second: boolean) {
    return html`
      <section class="screen">
        <div class="strip">${second ? nothing : html`<i></i>`}</div>
        <div class=${classMap({ main: true, first: !second })}>
          <side-bar .second=${second}></side-bar>
          <div class="col">
            <browser-chrome .second=${second}></browser-chrome>
            <site-frame .second=${second}>
              ${second ? html`<edit-page></edit-page>` : html`<departments-page></departments-page>`}
            </site-frame>
          </div>
        </div>
        <task-bar .second=${second}></task-bar>
      </section>`;
  }
  render() {
    return html`${this.screen(false)}${this.screen(true)}`;
  }
}
